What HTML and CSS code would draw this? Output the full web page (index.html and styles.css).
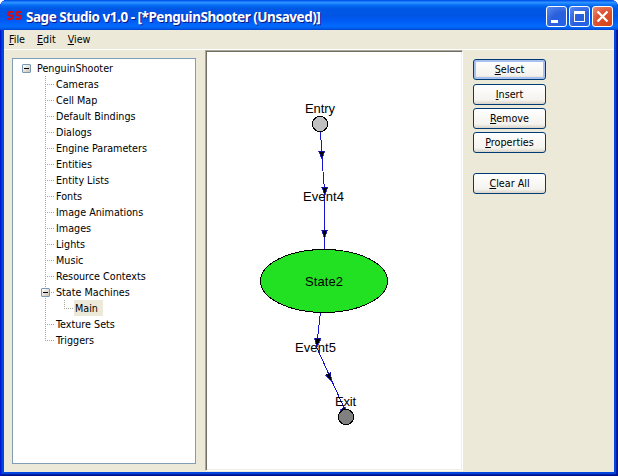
FILE: index.html
```html
<!DOCTYPE html>
<html lang="en">
<head>
<meta charset="utf-8">
<title>Sage Studio</title>
<link rel="stylesheet" href="styles.css">
</head>
<body>
<div class="window">
  <header class="titlebar">
    <svg class="logo" width="15" height="9" viewBox="0 0 15 9" fill="none" stroke="#d40c18" stroke-width="2"><path d="M7 1H3Q1 1 1 2.7T3 4.4H5Q6 4.6 6 6T4 8H0M15 1H11Q9 1 9 2.7T11 4.4H12Q14 4.6 14 6T12 8H8"/></svg>
    <h1 class="title">Sage Studio v1.0 - [*PenguinShooter (Unsaved)]</h1>
    <div class="controls">
      <span class="control"><svg width="19" height="19"><path fill="#fff" d="M4 13h7v3H4z"/></svg></span>
      <span class="control"><svg width="19" height="19"><path fill="#fff" fill-rule="evenodd" d="M4 4h11v11H4zM5 7v7h9V7z"/></svg></span>
      <span class="control close"><svg width="19" height="19"><path stroke="#fff" stroke-width="2.3" d="M4.5 4.5l10 10M14.5 4.5l-10 10"/></svg></span>
    </div>
  </header>
  <nav class="menu"><span><u>F</u>ile</span><span><u>E</u>dit</span><span><u>V</u>iew</span></nav>
  <main class="content">
    <ul class="tree">
      <li class="root"><i class="toggle"></i><span>PenguinShooter</span></li>
      <li><span>Cameras</span></li>
      <li><span>Cell Map</span></li>
      <li><span>Default Bindings</span></li>
      <li><span>Dialogs</span></li>
      <li><span>Engine Parameters</span></li>
      <li><span>Entities</span></li>
      <li><span>Entity Lists</span></li>
      <li><span>Fonts</span></li>
      <li><span>Image Animations</span></li>
      <li><span>Images</span></li>
      <li><span>Lights</span></li>
      <li><span>Music</span></li>
      <li><span>Resource Contexts</span></li>
      <li class="branch"><i class="toggle"></i><span>State Machines</span></li>
      <li class="leaf"><span class="selected">Main</span></li>
      <li><span>Texture Sets</span></li>
      <li class="last"><span>Triggers</span></li>
    </ul>
    <section class="canvas">
      <svg width="255" height="418" viewBox="207 52 255 418" shape-rendering="crispEdges">
        <g fill="none" stroke="#1414cc">
          <path d="M320.5 132L322.5 165L324.5 190V249M320.5 312L316.5 347L345.5 411"/>
        </g>
        <g fill="#000" stroke="#1414cc" stroke-width=".8">
          <path d="M318.5 151h6l-2.5 8zM321.5 187h6l-2.5 8zM321.5 230h6l-3 8zM314.500 338l6 .5-4 8zM325.500 375l5-3 1 9.500zM340 410l5-3 1 7z"/>
        </g>
        <g stroke="#000">
          <circle cx="320" cy="124" r="7.600" fill="#c0c0c0"/>
          <ellipse cx="324" cy="281" rx="63.500" ry="31.500" fill="#22e022"/>
          <circle cx="346" cy="417" r="7.600" fill="#808080"/>
        </g>
        <g class="labels">
          <text x="305" y="113" textLength="30">Entry</text>
          <text x="303" y="201" textLength="41">Event4</text>
          <text x="305" y="286" textLength="38">State2</text>
          <text x="295" y="352" textLength="41">Event5</text>
          <text x="335" y="406" textLength="21">Exit</text>
        </g>
      </svg>
    </section>
    <aside class="actions">
      <button class="focused"><u>S</u>elect</button>
      <button><u>I</u>nsert</button>
      <button><u>R</u>emove</button>
      <button><u>P</u>roperties</button>
      <button class="clear"><u>C</u>lear All</button>
    </aside>
  </main>
</div>
</body>
</html>
```
FILE: styles.css
```css
* { box-sizing: border-box; }
body {
  margin: 0;
  background: #fff;
  font: 10.7px/16px "DejaVu Sans Condensed", "DejaVu Sans", sans-serif;
  font-stretch: condensed;
  color: #000;
}
.window {
  width: 618px;
  height: 476px;
  display: flex;
  flex-direction: column;
  padding: 0 4px 4px;
  overflow: hidden;
  border-radius: 7px 7px 0 0;
  background: #0046e0;
  box-shadow: inset 1px 0 #0019cf, inset -1px -1px #00138c, inset -2px -2px #001ea0, inset 2px 0 #0831d9;
}
.titlebar {
  flex: none;
  height: 30px;
  margin: 0 -4px;
  padding: 0 5px 0 7px;
  display: flex;
  align-items: center;
  background: linear-gradient(#0058ee 0, #0058ee 1px, #3593ff 2px, #288eff 3px, #127dff 4px, #0366ee 6px, #0057e5 9px, #0055e5 16px, #005bf5 21px, #026afe 26px, #0062ef 28px, #0043cf 30px);
}
.logo { flex: none; margin-top: 0; }
.title {
  margin: 4px 0 0 4px;
  font: bold 13.500px/20px "Noto Sans", sans-serif;
  white-space: nowrap;
  color: #fff;
  text-shadow: 1px 1px #0a1883;
  letter-spacing: -.47px;
}
.controls { display: flex; gap: 2px; margin: 3px 0 0 auto; }
.control {
  width: 21px;
  height: 21px;
  border: 1px solid #fff;
  border-radius: 3px;
  background: radial-gradient(circle at 80% 90%, #2361e8, #2b5fdc 50%, #5a8cf2);
}
.control svg { display: block; }
.close { background: radial-gradient(circle at 80% 90%, #d84418, #dc5030 55%, #ee9078); }
.menu {
  flex: none;
  height: 20px;
  padding: 1px 5px 0;
  display: flex;
  gap: 12px;
  background: #ece9d8;
  border-bottom: 1px solid #fff;
  line-height: 17px;
}
u { text-decoration-thickness: 1px; text-underline-offset: 1px; text-decoration-skip-ink: none; }
.content { flex: 1; display: flex; background: #ece9d8; min-height: 0; }
.tree {
  width: 184px;
  height: 406px;
  margin: 8px 9px 0 8px;
  padding: 1px 0 0;
  border: 1px solid #7f9db9;
  background: #fff;
  list-style: none;
}
.tree li {
  display: flex;
  align-items: center;
  height: 16px;
  padding-left: 32px;
  white-space: nowrap;
  background:
    repeating-linear-gradient(#aca899 0 1px, transparent 1px 2px) 32px 0 / 1px 16px no-repeat,
    repeating-linear-gradient(90deg, #aca899 0 1px, transparent 1px 2px) 34px 8px / 8px 1px no-repeat;
}
.tree span { height: 16px; margin-left: 11px; line-height: 18px; }
.tree .root { padding-left: 9px; background: none; }
.tree .root span { margin-left: 6px; }
.tree .branch { padding-left: 28px; }
.tree .branch span { margin-left: 6px; }
.tree .leaf {
  padding-left: 50px;
  background:
    repeating-linear-gradient(#aca899 0 1px, transparent 1px 2px) 32px 0 / 1px 16px no-repeat,
    repeating-linear-gradient(#aca899 0 1px, transparent 1px 2px) 51px 0 / 1px 9px no-repeat,
    repeating-linear-gradient(90deg, #aca899 0 1px, transparent 1px 2px) 53px 8px / 8px 1px no-repeat;
}
.tree .selected { padding: 0 5px 0 1px; width: 29px; background: #ece9d8; }
.tree .last { background-size: 1px 9px, 8px 1px; }
.toggle {
  flex: none;
  width: 9px;
  height: 9px;
  margin-top: 1px;
  border: 1px solid #7898b5;
  border-radius: 1px;
  background: linear-gradient(#000, #000) center / 5px 1px no-repeat, linear-gradient(135deg, #fff, #c9c2b5);
}
.canvas {
  width: 258px;
  height: 421px;
  border: 1px solid;
  border-color: #aca899 #fff #fff #aca899;
  background: #fff;
  box-shadow: inset 1px 1px #716f64, inset -1px -1px #f1efe2;
}
.canvas svg { display: block; margin: 1px; }
.labels { font: 13px "Liberation Sans", sans-serif; }
.actions { display: flex; flex-direction: column; padding: 9px 0 0 10px; gap: 3px; }
button {
  width: 73px;
  height: 21px;
  padding: 0;
  border: 1px solid #003c74;
  border-radius: 3px;
  background: linear-gradient(#fff, #f4f3ee 80%, #d8d3c8);
  font: inherit;
  color: #000;
}
.focused { margin-bottom: 1px; box-shadow: inset 0 0 0 2px #a7c0f0; }
.clear { margin-top: 17px; }
```
